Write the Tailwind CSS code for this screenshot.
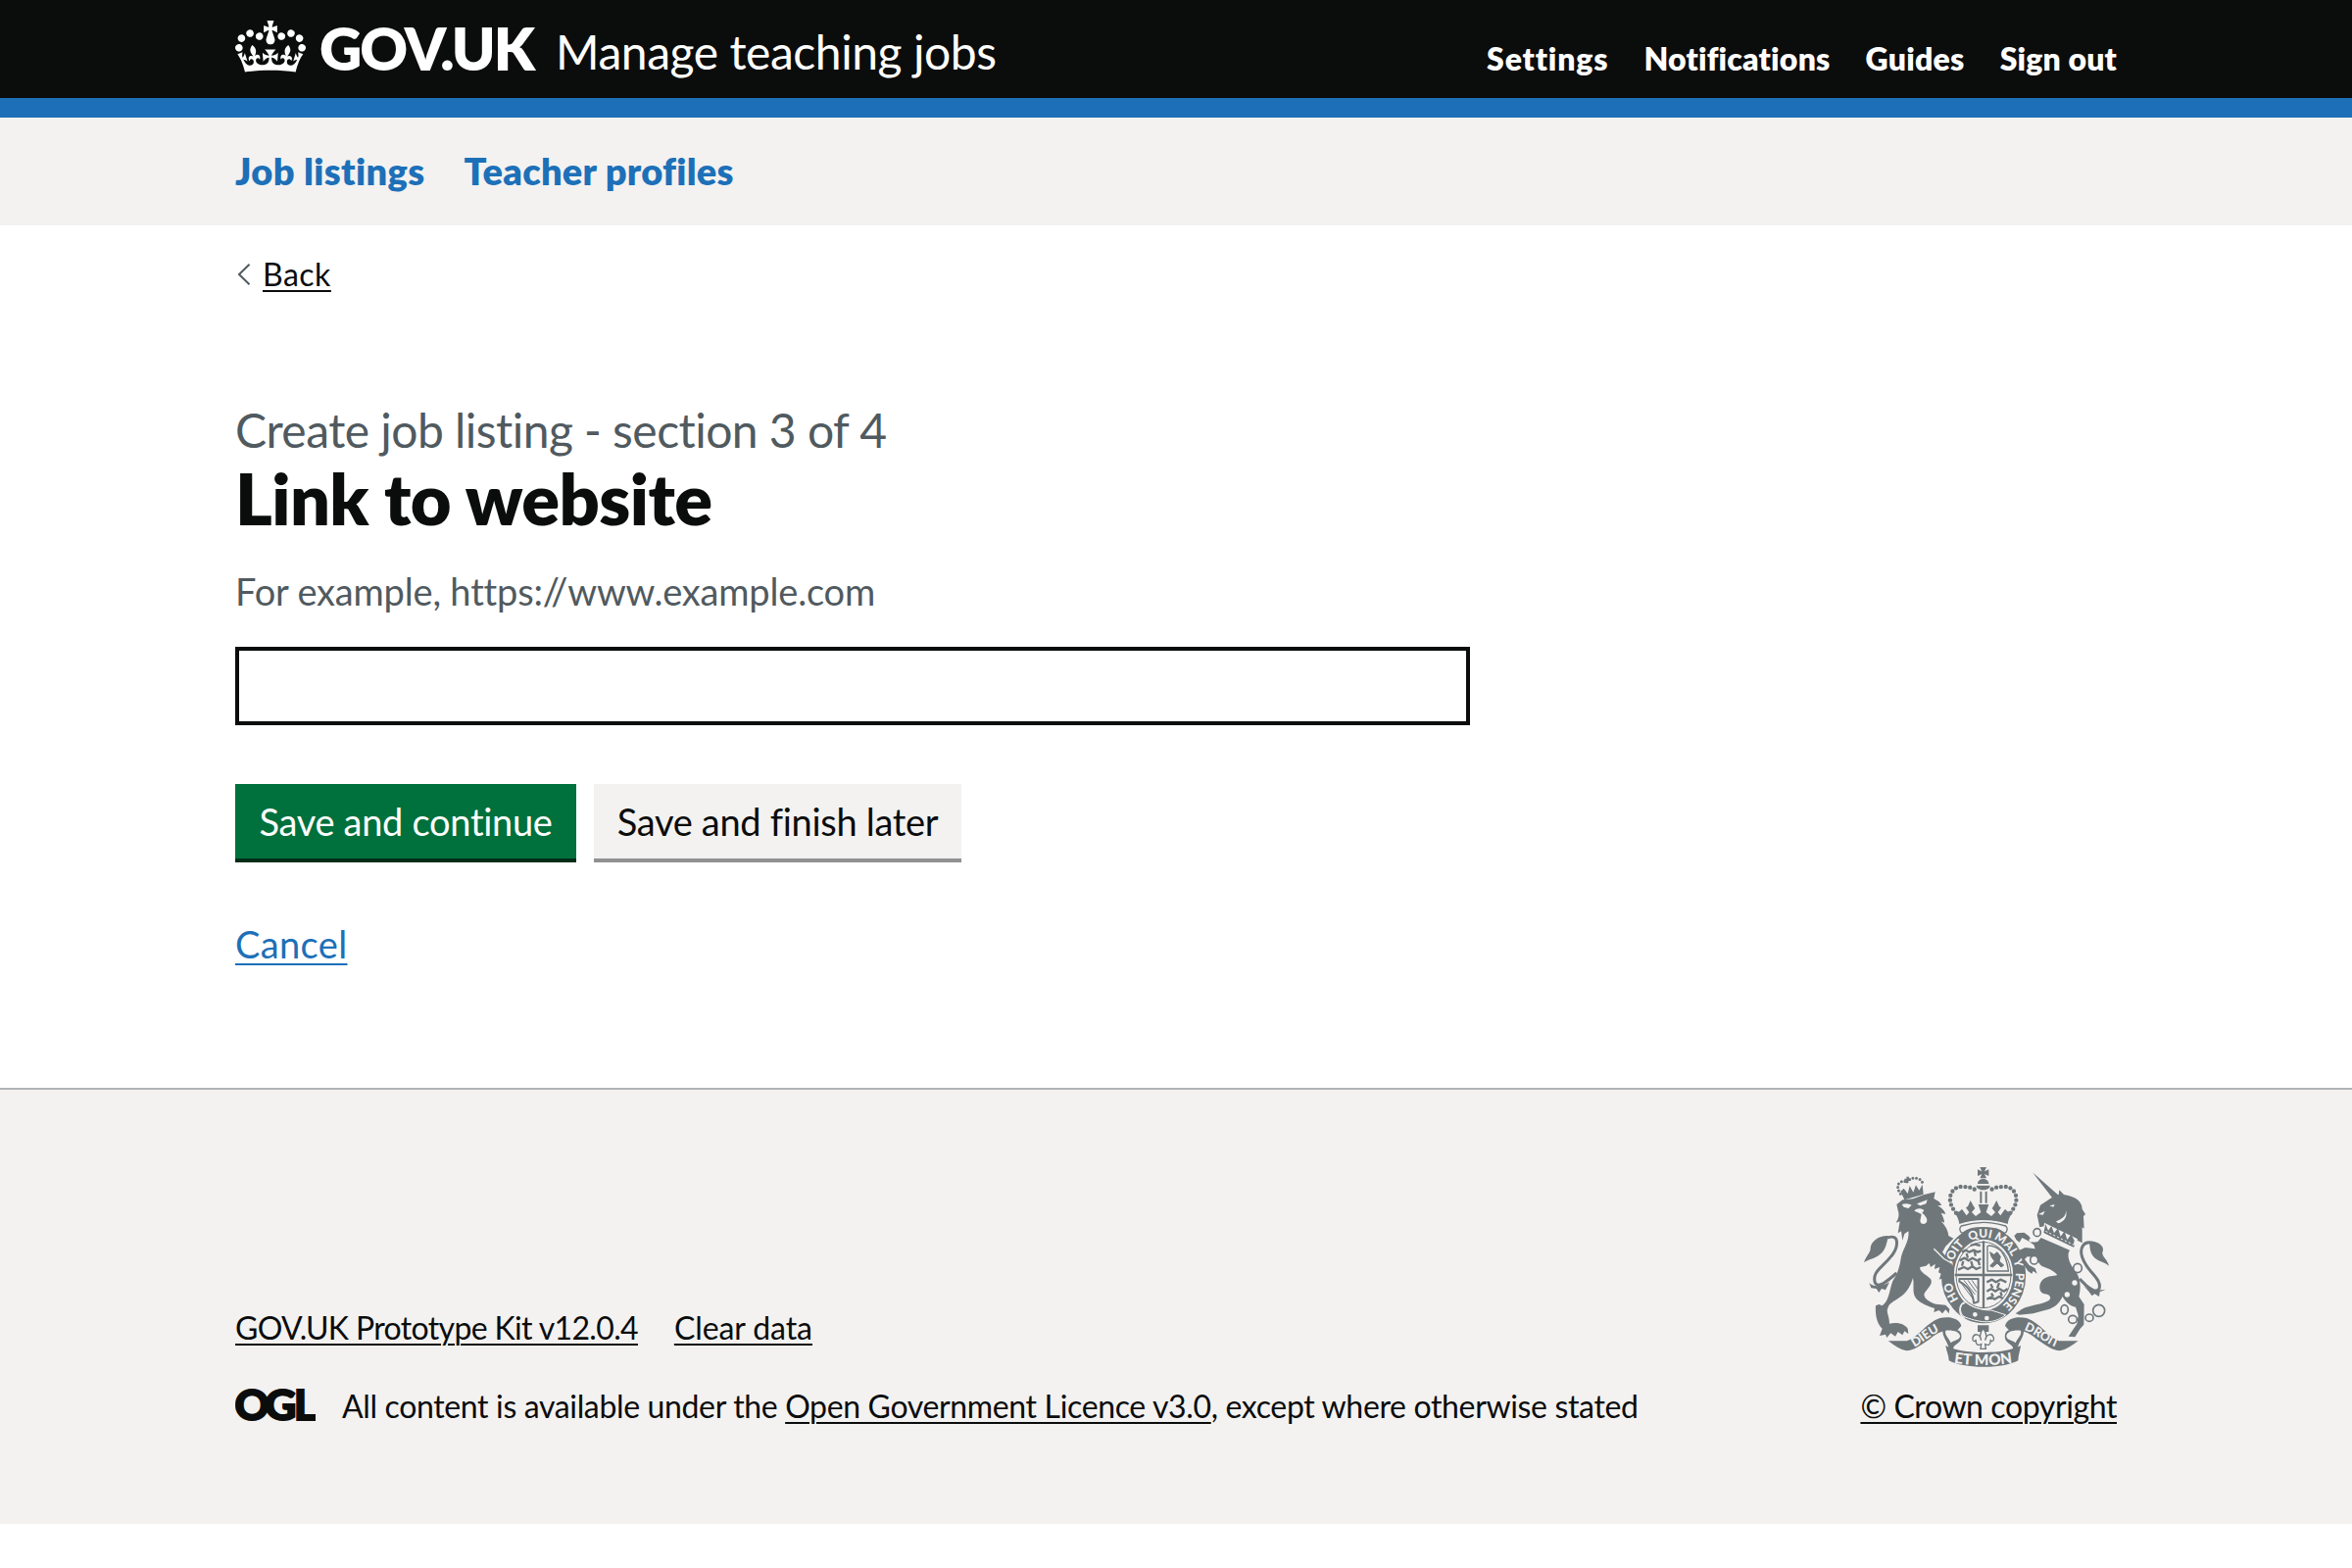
<!DOCTYPE html>
<html lang="en">
<head>
<meta charset="utf-8">
<title>Link to website - Manage teaching jobs - GOV.UK</title>
<script src="https://cdn.jsdelivr.net/npm/@tailwindcss/browser@4"></script>
</head>
<body class="bg-white font-['Lato','Noto_Sans',sans-serif] text-[#0b0c0c] [font-variant-ligatures:none]">

<header class="h-[120px] border-b-20 border-[#1d70b8] bg-[#0b0c0c] text-white">
  <div class="mx-[240px] flex items-start justify-between">
    <a class="flex items-start whitespace-nowrap">
      <svg class="mt-[21px] h-[53px] w-[72px]" viewBox="0 0 132 97" fill="currentColor"><path d="M25 30.2c3.5 1.5 7.7-.2 9.1-3.7 1.5-3.6-.2-7.8-3.9-9.2-3.6-1.4-7.6.3-9.1 3.9-1.4 3.5.3 7.5 3.9 9zM9 39.5c3.6 1.5 7.8-.2 9.2-3.7 1.5-3.6-.2-7.8-3.9-9.1-3.6-1.5-7.6.2-9.1 3.8-1.4 3.5.3 7.5 3.8 9zM4.4 57.2c3.5 1.5 7.7-.2 9.1-3.8 1.5-3.6-.2-7.7-3.9-9.1-3.5-1.5-7.6.3-9.1 3.8-1.4 3.5.3 7.6 3.9 9.1zm38.3-21.4c3.5 1.5 7.7-.2 9.1-3.8 1.5-3.6-.2-7.7-3.9-9.1-3.6-1.5-7.6.3-9.1 3.8-1.3 3.6.4 7.7 3.9 9.1zm64.4-5.6c-3.6 1.5-7.8-.2-9.1-3.7-1.5-3.6.2-7.8 3.8-9.2 3.6-1.4 7.7.3 9.2 3.9 1.3 3.5-.4 7.5-3.9 9zm15.9 9.3c-3.6 1.5-7.7-.2-9.1-3.7-1.5-3.6.2-7.8 3.7-9.1 3.6-1.5 7.7.2 9.2 3.8 1.5 3.5-.3 7.5-3.8 9zm4.7 17.7c-3.6 1.5-7.8-.2-9.2-3.8-1.5-3.6.2-7.7 3.9-9.1 3.6-1.5 7.7.3 9.2 3.8 1.3 3.5-.4 7.6-3.9 9.1zM89.3 35.8c-3.6 1.5-7.8-.2-9.2-3.8-1.4-3.6.2-7.7 3.9-9.1 3.6-1.5 7.7.3 9.2 3.8 1.4 3.6-.3 7.7-3.9 9.1zM69.7 17.7l8.9 4.7V9.3l-8.9 2.8c-.2-.3-.5-.6-.9-.9L72.4 0H59.6l3.5 11.2c-.3.3-.6.5-.9.9l-8.8-2.8v13.1l8.8-4.7c.3.3.6.7.9.9l-5 15.4v.1c-.2.8-.4 1.6-.4 2.4 0 4.1 3.1 7.5 7 8.1h.2c.3 0 .7.1 1 .1.4 0 .7 0 1-.1h.2c4-.6 7.1-4.1 7.1-8.1 0-.8-.1-1.7-.4-2.4V34l-5.1-15.4c.4-.2.7-.6 1-.9zM66 92.8c16.9 0 32.8 1.1 47.1 3.2 4-16.9 8.9-26.7 14-33.5l-9.6-3.4c1 4.9 1.1 7.2 0 10.2-1.5-1.4-3-4.3-4.2-8.7L108.6 76c2.8-2 5-3.2 7.5-3.3-4.4 9.4-10 11.9-13.6 11.2-4.3-.8-6.3-4.6-5.6-7.9 1-4.7 5.7-5.9 8-.5 4.3-8.7-3-11.4-7.6-8.8 7.1-7.2 7.9-13.5 2.1-21.1-8 6.1-8.1 12.3-4.5 20.8-4.7-5.4-12.1-2.5-9.5 6.2 3.4-5.2 7.9-2 7.2 3.1-.6 4.3-6.4 7.8-13.5 7.2-10.3-.9-10.9-8-11.2-13.8 2.5-.5 7.1 1.8 11 7.3L80.2 60c-4.1 4.4-8 5.3-12.3 5.4 1.4-4.4 8-11.6 8-11.6H55.5s6.4 7.2 7.9 11.6c-4.2-.1-8-1-12.3-5.4l1.4 16.4c3.9-5.5 8.5-7.7 10.9-7.3-.3 5.8-.9 12.8-11.1 13.8-7.2.6-12.9-2.9-13.5-7.2-.7-5 3.8-8.3 7.1-3.1 2.7-8.7-4.6-11.6-9.4-6.2 3.7-8.5 3.6-14.7-4.6-20.8-5.8 7.6-5 13.9 2.2 21.1-4.7-2.6-11.9.1-7.7 8.8 2.3-5.5 7.1-4.2 8.1.5.7 3.3-1.3 7.1-5.7 7.9-3.5.7-9-1.8-13.5-11.2 2.5.1 4.7 1.3 7.5 3.3l-4.7-15.4c-1.2 4.4-2.7 7.2-4.3 8.7-1.1-3-.9-5.3 0-10.2l-9.5 3.4c5 6.9 9.9 16.7 14 33.5 14.8-2.1 30.8-3.2 47.7-3.2z"/></svg>
      <span class="mt-[19px] ml-[14px] w-[238px] text-[60px] leading-[60px] font-extrabold tracking-[-2px]">GOV.UK</span>
      <span class="mt-[23px] ml-[3px] text-5xl leading-[60px] tracking-[-0.45px]">Manage teaching jobs</span>
    </a>
    <nav class="mt-10 flex gap-9 text-[32px] leading-10 font-extrabold whitespace-nowrap">
      <a class="tracking-[0.85px]">Settings</a>
      <a class="tracking-[0.2px]">Notifications</a>
      <a class="tracking-[0.25px]">Guides</a>
      <a class="tracking-[0.15px]">Sign out</a>
    </nav>
  </div>
</header>

<nav class="flex h-[110px] gap-10 bg-[#f3f2f1] px-[240px] pt-[29px] text-[38px] leading-[50px] font-extrabold text-[#1d70b8]">
  <a class="tracking-[0.35px]">Job listings</a>
  <a class="tracking-[0.28px]">Teacher profiles</a>
</nav>

<main class="mx-[240px] h-[880px] pt-[30px]">
  <a class="flex w-fit text-[32px] leading-10">
    <svg class="mt-[9px] mr-3 ml-[2px] h-[22px] w-[14px]" viewBox="0 0 14 22" fill="none" stroke="#505a5f" stroke-width="2"><path d="M12.500 .8 2 11l10.500 10.200"/></svg>
    <span class="tracking-[0.5px] underline decoration-2 underline-offset-[4px]">Back</span>
  </a>
  <p class="mt-[109px] text-5xl leading-[60px] tracking-[-0.54px] text-[#505a5f]">Create job listing - section 3 of 4</p>
  <h1 class="-mt-px text-[72px] leading-[80px] font-extrabold tracking-[-0.57px]">Link to website</h1>
  <p class="mt-[30px] text-[38px] leading-[50px] tracking-[-0.18px] text-[#505a5f]">For example, https://www.example.com</p>
  <input class="mt-8 block h-20 w-[1260px] border-4 border-[#0b0c0c] bg-white px-2 text-[38px]" type="text" aria-label="Link to website">
  <div class="mt-[60px] flex gap-[18px] text-[38px] leading-[50px] tracking-[-0.3px]">
    <button class="h-20 w-[348px] border-b-4 border-[#002d18] bg-[#00703c] pb-px text-white">Save and continue</button>
    <button class="h-20 w-[375px] border-b-4 border-[#929191] bg-[#f3f2f1] pb-px">Save and finish later</button>
  </div>
  <a class="mt-[58px] block w-fit text-[38px] leading-[50px] tracking-[0.36px] text-[#1d70b8] underline decoration-2 underline-offset-[5px]">Cancel</a>
</main>

<footer class="flex h-[445px] items-start justify-between border-t-2 border-[#b1b4b6] bg-[#f3f2f1] px-[240px] text-[32px] leading-10 whitespace-nowrap">
  <div class="pt-[223px]">
    <div class="flex gap-[37px] underline decoration-2 underline-offset-[4px]">
      <a class="tracking-[-0.65px]">GOV.UK Prototype Kit v12.0.4</a>
      <a class="tracking-[-0.09px]">Clear data</a>
    </div>
    <div class="mt-10 flex tracking-[-0.35px]">
      <svg class="mt-[2px] mr-[27px] h-[33px] w-[82px]" viewBox="0 0 82 33" fill="#0b0c0c" stroke="#0b0c0c" font-family="Lato, sans-serif" font-weight="900" font-size="42">
        <text x="-0.500" y="31.500" textLength="35" lengthAdjust="spacingAndGlyphs" stroke-width="2">O</text>
        <text x="30" y="31.500" textLength="32" lengthAdjust="spacingAndGlyphs" stroke-width="2">G</text>
        <text x="60" y="31.500" textLength="22" lengthAdjust="spacingAndGlyphs" stroke-width="2">L</text>
      </svg>
      <p>All content is available under the <a class="underline decoration-2 underline-offset-[4px]">Open Government Licence v3.0</a>, except where otherwise stated</p>
    </div>
  </div>
  <div class="pt-[77px]">
    <svg class="block h-[210px] w-[260px]" viewBox="60 60 780 630" fill="#6f777b">
      <!-- lion's crown -->
      <g>
        <path d="M184 140l12 26 58-17-3-30-10 18-10-16-8 22-11-20-6 24-12-16z"/>
        <g stroke="#6f777b" stroke-width="9" stroke-linecap="round" stroke-dasharray="0 11" fill="none"><path d="M184 148c-16-24-8-42 18-38M202 110c16-16 48-14 50 8"/></g>
        <path d="M202 95h8l-2 20h-4zM196 101h20v6h-20z"/>
      </g>
      <!-- tails -->
      <path d="M144 282c40-14 32 32 12 56-30 38-60 48-50 82 10 18 36-4 66-30" fill="none" stroke="#6f777b" stroke-width="9"/>
      <path d="M146 276c-30-2-54 20-54 38 0 14-14 24-20 44 12-10 26-10 42-20 24-14 28-38 32-62zM88 420c14 14 38 12 62-2l-12 24-12-4-8 12-8-12-16-2z"/>
      <path d="M780 300c-40-14-56 20-30 62 20 34 50 50 42 76-8 12-24 4-40-10l-20-20" fill="none" stroke="#6f777b" stroke-width="9"/>
      <path d="M762 296c32-8 48 18 40 30-2 14 14 20 20 42-12-10-26-12-38-20-20-14-20-32-22-52zM744 428c14 12 34 18 68 12l-18 8-2 14-14-8-8 6-10-14z"/>
      <!-- unicorn head and collar -->
      <path d="M588 82l80 70-16 12zM602 212l10-30 34-22 22-10 2-14 14 14c30 4 56 18 56 44l10 16-6 6 2 38-6-4v48l-84-44-12 12-14-6-4-14-16 4z"/>
      <path d="M660 232c22-8 32-20 30-34 6 20-6 36-24 40zM640 184l16-4-4 8zM606 210l20-10-6 12z" fill="#f3f2f1"/>
      <path d="M624 236l-2 28 96 46 8-24z" fill="#f3f2f1"/>
      <path d="M628 240l8 20 10-14 8 22 12-16 8 26 12-16 8 26 12-16 10 18-4 20-90-44z"/>
      <path d="M626 264l90 44" stroke="#6f777b" stroke-width="8"/>
      <path d="M628 262l88 43" stroke="#f3f2f1" stroke-width="3" stroke-dasharray="7 6"/>
      <!-- garter and shield -->
      <ellipse cx="438" cy="396" rx="133" ry="152" fill="#f3f2f1"/>
      <ellipse cx="438" cy="396" rx="110" ry="128" fill="none" stroke="#6f777b" stroke-width="39"/>
      <g fill="none" stroke="#6f777b" stroke-linejoin="round">
        <ellipse cx="438" cy="396" rx="84" ry="101" stroke-width="3"/>
        <path d="M438 292v206M350 396h176" stroke-width="7"/>
        <path d="M372 326l12-6 10 6 14-6 12 6 10-4M364 352l16-8 12 8 12-8 14 8 12-6M360 380l18-8 12 6 14-8 12 8 14-6M398 306l14-4 16 4M386 330l4 14M410 324l4 14M422 352l4 14M376 354l-4 14M400 354l4 14" stroke-width="7"/>
        <path d="M448 470l14-6 10 6 14-8 12 6M448 446l14-8 12 8 12-8 14 8 12-8M448 418l16-8 12 8 14-8 18 8M460 424l6 12M486 420l-6 16M462 452l6 10M490 448l4 12" stroke-width="7"/>
        <path d="M450 306v78h66M452 306c36 0 56 30 62 76" stroke-width="4"/>
        <path d="M458 326l12 8 10-8 10 14-4 14 14 12-8 6-12-12-14 12-8-4 14-14-10-14z" fill="#6f777b" stroke-width="3"/>
        <path d="M364 408h58v70l-14 4c-2-36-22-54-44-66z" stroke-width="6"/>
        <path d="M378 412l34 44M390 412l26 36M402 412l18 26M372 424l36 48" stroke-width="3"/>
      </g>
      <path d="M376 480c-14 14-10 40 8 46 46 16 84 22 122-8l-44-14c-26 0-56-6-78-24z" stroke="#f3f2f1" stroke-width="3"/>
      <g fill="#f3f2f1"><circle cx="412" cy="517" r="7"/><circle cx="448" cy="528" r="7"/></g>
      <path d="M380 482c-20 2-18 42 0 44" fill="none" stroke="#f3f2f1" stroke-width="5"/>
      <path id="garter" d="M438 511a99 115 0 0 1 0-230a99 115 0 0 1 0 230" fill="none"/>
      <g font-family="Lato, sans-serif" font-weight="900" font-size="36" fill="#f3f2f1" text-anchor="middle">
        <text><textPath href="#garter" startOffset="17.500%">HO</textPath></text>
        <text><textPath href="#garter" startOffset="34.500%">SOIT</textPath></text>
        <text><textPath href="#garter" startOffset="48.500%">QUI</textPath></text>
        <text><textPath href="#garter" startOffset="60.500%">MAL</textPath></text>
        <text><textPath href="#garter" startOffset="70%">Y</textPath></text>
        <text><textPath href="#garter" startOffset="82.300%">PENSE</textPath></text>
      </g>
      <!-- lion -->
      <path d="M172 180L190 166 222 163 256 150 290 142 286 162 302 172 310 182 298 184C312 192 320 202 322 210L308 206C314 218 318 226 318 236L308 232C322 246 330 262 331 276L346 284 334 296 322 308 312 326 330 348 341 362 348 400 346 415 338 408 334 422 326 408 318 424 312 406 302 410 308 392 300 388 304 372 288 378 290 362 276 372 272 360 262 368 244 372C240 385 262 395 276 408 286 425 262 440 256 455 256 470 280 484 300 486L322 488 334 500 332 514 322 502 312 514 302 504 286 510 288 498C262 490 236 478 228 462 220 448 226 425 222 405 214 430 206 445 190 458 170 474 150 480 146 495 138 510 150 520 150 545 170 540 196 544 206 560L208 576 196 568 190 580 176 570 168 584 154 574 142 588 138 578 120 582 128 560C112 545 106 520 108 490L118 486 128 490C150 475 150 440 160 415 174 395 182 370 186 340 194 310 212 290 208 262L196 270 190 290 186 262 176 268 182 232 170 236C180 220 180 210 176 198Z"/>
      <path d="M188 180c10-4 22-2 30 2l-10 10-14-4zM234 178l32-12-4 12-18 6zM226 200c8-10 22-8 30-2l-6 8c10 8 18 18 14 28-6 10-20 6-20-4l4-20-12-6z" fill="#f3f2f1"/>
      <path d="M286 316l30 30 24 14" stroke="#f3f2f1" stroke-width="4" fill="none"/>
      <!-- unicorn body -->
      <path d="M614 282L702 320C690 338 704 366 722 388 736 410 736 440 730 462L746 486 745 548 734 560 718 586 698 584 714 560 724 546 728 520 720 494C704 492 688 478 680 462 672 478 662 492 640 500L590 514 548 518 536 514 556 500C580 488 620 486 638 474 648 464 640 456 626 454 604 450 606 420 622 408 636 398 652 400 664 396 650 380 630 374 618 370 608 364 604 352 600 342L572 340 564 348 578 366 596 376 602 392 590 384 586 392 574 384 560 362 552 330 544 322 566 312 596 316 592 304 572 290 556 282 548 296 538 288 532 276 540 268 562 266 576 276 590 296 604 294Z"/>
      <g fill="#f3f2f1" stroke="#6f777b" stroke-width="5">
        <ellipse cx="602" cy="266" rx="11" ry="12"/><ellipse cx="593" cy="350" rx="12" ry="13"/><ellipse cx="726" cy="375" rx="13" ry="14"/><ellipse cx="686" cy="502" rx="11" ry="14"/><ellipse cx="711" cy="532" rx="13" ry="12"/><ellipse cx="762" cy="527" rx="12" ry="11"/><circle cx="791" cy="505" r="18"/>
      </g>
      <g fill="#f3f2f1"><circle cx="717" cy="420" r="8"/><circle cx="694" cy="456" r="8"/><circle cx="583" cy="290" r="6"/></g>
      <!-- royal crown -->
      <path d="M427 66h20l-6 13 13-6v20l-13-6 6 13h-20l6-13-13 6V73l13 6zM420 117c0-20 34-20 34 0zM416 122h42c0 18-42 18-42 0z"/>
      <path d="M430 140v36M446 140v36" stroke="#6f777b" stroke-width="6"/>
      <g fill="none" stroke="#6f777b" stroke-width="13" stroke-linecap="round" stroke-dasharray="0 14.500"><path d="M354 206c-38-44-10-84 20-80 16 0 32 2 42 12M520 206c38-44 10-84-20-80-16 0-32 2-42 12"/></g>
      <path d="M346 198c8 6 14 6 20 2l6-6 14 20 8-10-10-14 6-4 8-18 10 18 4 6-10 12 12 12 16-12-8-24h32l-8 24 16 12 12-12-10-12 4-6 10-18 8 18 6 4-10 14 8 10 14-20 6 6c6 4 12 4 20-2-10 16-16 26-18 42-46-16-102-16-148 0-2-16-8-26-18-42z"/>
      <path d="M370 246c44-14 92-14 136 0 8 8 4 20-4 22-16-12-30-17-64-17s-48 5-64 17c-8-2-12-14-4-22z" fill="#f3f2f1" stroke="#6f777b" stroke-width="4"/>
      <!-- plant badge -->
      <path d="M420 550h34v20h-10l-2 28h-10l-2-28h-10z"/>
      <path d="M437 560c12 14 12 24 6 36 4-22 22-22 26-8 2 12-8 14-10 6 2 18-8 18-16 14l2 14h-16l2-14c-8 4-18 4-16-14-2 8-12 6-10-6 4-14 22-14 26 8-6-12-6-22 6-36z" fill="#f3f2f1" stroke="#6f777b" stroke-width="4"/>
      <!-- motto scroll -->
      <path d="M146 598l58 0c40-16 56-54 100-70 30-6 60 0 66 24l-22 24c-18-18-46-8-72 14-26 18-46 34-72 38-22-2-40-18-58-30z"/>
      <path d="M314 562c-6 24 18 38 20 70l12-8c-4-16 20-16 24-34 2-12-2-24-14-26z"/>
      <path d="M322 566c-4 14 8 20 16 38 10-10 26-8 28-20 0-14-20-20-44-18z" fill="#f3f2f1"/>
      <path d="M728 598l-58 0c-40-16-56-54-100-70-30-6-60 0-66 24l22 24c18-18 46-8 72 14 26 18 46 34 72 38 22-2 40-18 58-30z"/>
      <path d="M560 562c6 24-18 38-20 70l-12-8c4-16-20-16-24-34-2-12 2-24 14-26z"/>
      <path d="M552 566c4 14-8 20-16 38-10-10-26-8-28-20 0-14 20-20 44-18z" fill="#f3f2f1"/>
      <path d="M322 612c50 28 180 28 230 0-2 16-8 30-8 46-46 26-168 26-212 0 0-16-8-30-10-46z"/>
      <path id="left" d="M212 622c36-10 62-46 110-60" fill="none"/>
      <path id="right" d="M548 560c48 10 78 50 128 62" fill="none"/>
      <path id="mid" d="M340 664q97 16 194 0" fill="none"/>
      <g font-family="Lato, sans-serif" font-weight="900" fill="#f3f2f1" text-anchor="middle">
        <text font-size="38"><textPath href="#left" startOffset="48%">DIEU</textPath></text>
        <text font-size="37"><textPath href="#right" startOffset="50%">DROIT</textPath></text>
        <text font-size="46"><textPath href="#mid" startOffset="50%">ET MON</textPath></text>
      </g>
    </svg>
    <a class="mt-4 block w-fit tracking-[-0.4px] underline decoration-2 underline-offset-[4px]">© Crown copyright</a>
  </div>
</footer>
</body>
</html>
